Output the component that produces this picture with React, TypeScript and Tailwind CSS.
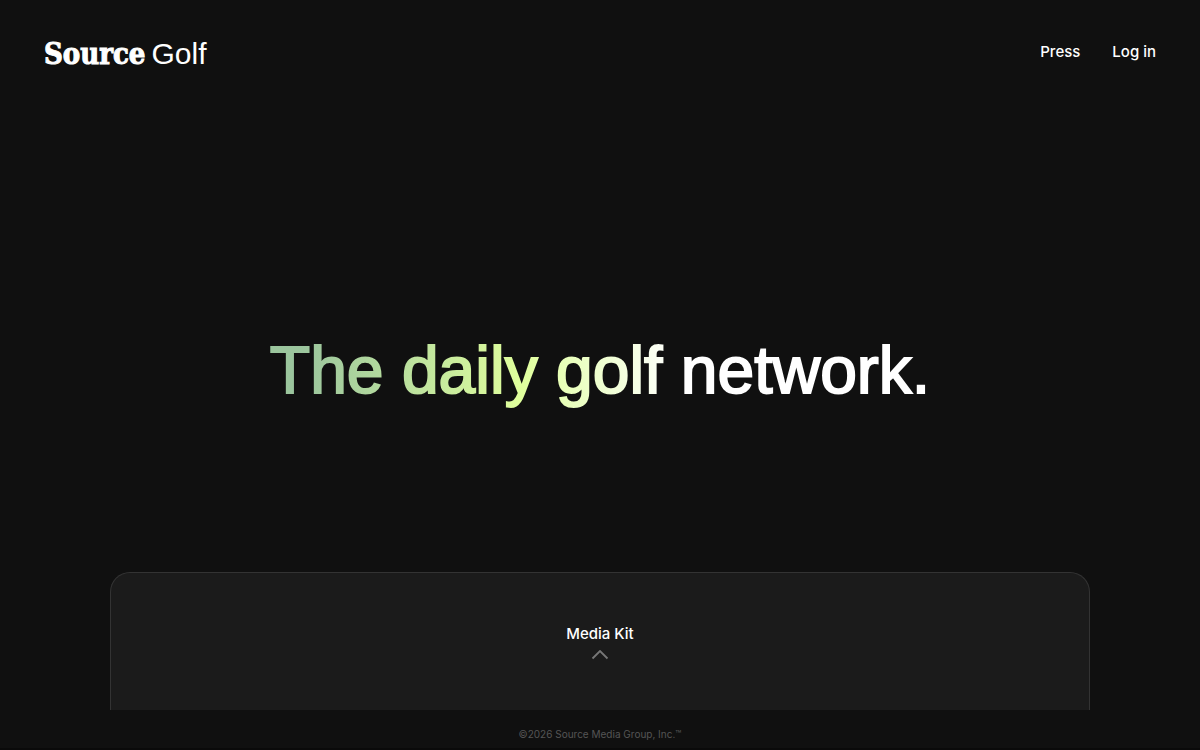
const navLinks = [
  { label: "Press", href: "#press" },
  { label: "Log in", href: "#login" },
];

export default function App() {
  return (
    <div className="flex min-h-screen flex-col bg-[#101010] font-['Inter',sans-serif] text-white">
      <Header />
      <main className="flex flex-1 flex-col">
        <section className="flex flex-1 items-center justify-center px-6 pt-18">
          {/* the transparent stroke thickens the clipped gradient a little */}
          <h1 className="bg-linear-to-r from-[#9bc59d] from-5% via-[#e0ff9c] via-38% to-white to-62% bg-clip-text pb-2 text-center font-['Liberation_Sans',sans-serif] text-[66px] leading-20 font-medium text-transparent [-webkit-text-stroke:2px_transparent]">
            The daily golf network.
          </h1>
        </section>
        <MediaKit />
      </main>
      <footer className="flex h-10 items-center justify-center border-b-2 border-[#0a0a0a] pt-2.5 text-[10px] leading-4 text-[#555]">
        ©2026 Source Media Group, Inc.™
      </footer>
    </div>
  );
}

function Header() {
  return (
    <header className="flex h-26 items-center justify-between px-11">
      <a href="#home" className="flex items-baseline gap-1.5 pt-1 leading-8">
        <span className="font-['DejaVu_Serif_Condensed','DejaVu_Serif',serif] text-[29px] font-bold [-webkit-text-stroke:1px_white]">
          Source
        </span>
        <span className="font-['Liberation_Sans',sans-serif] text-[30px]">
          Golf
        </span>
      </a>
      <nav className="flex gap-8">
        {navLinks.map((link) => (
          <a
            key={link.label}
            href={link.href}
            className="text-[15px] leading-6 font-medium"
          >
            {link.label}
          </a>
        ))}
      </nav>
    </header>
  );
}

function MediaKit() {
  return (
    <section className="px-6">
      <button className="mx-auto flex h-[138px] w-full max-w-[980px] flex-col items-center justify-center gap-1 rounded-t-[20px] border border-b-0 border-[#333] bg-[#1b1b1b] pb-[2px]">
        <span className="text-[15px] leading-6 font-medium">Media Kit</span>
        <svg
          width="18"
          height="10"
          viewBox="0 0 18 10"
          fill="none"
          stroke="#777"
          strokeWidth="1.8"
        >
          <path d="M1.5 8.5 9 1 16.5 8.5" />
        </svg>
      </button>
    </section>
  );
}
